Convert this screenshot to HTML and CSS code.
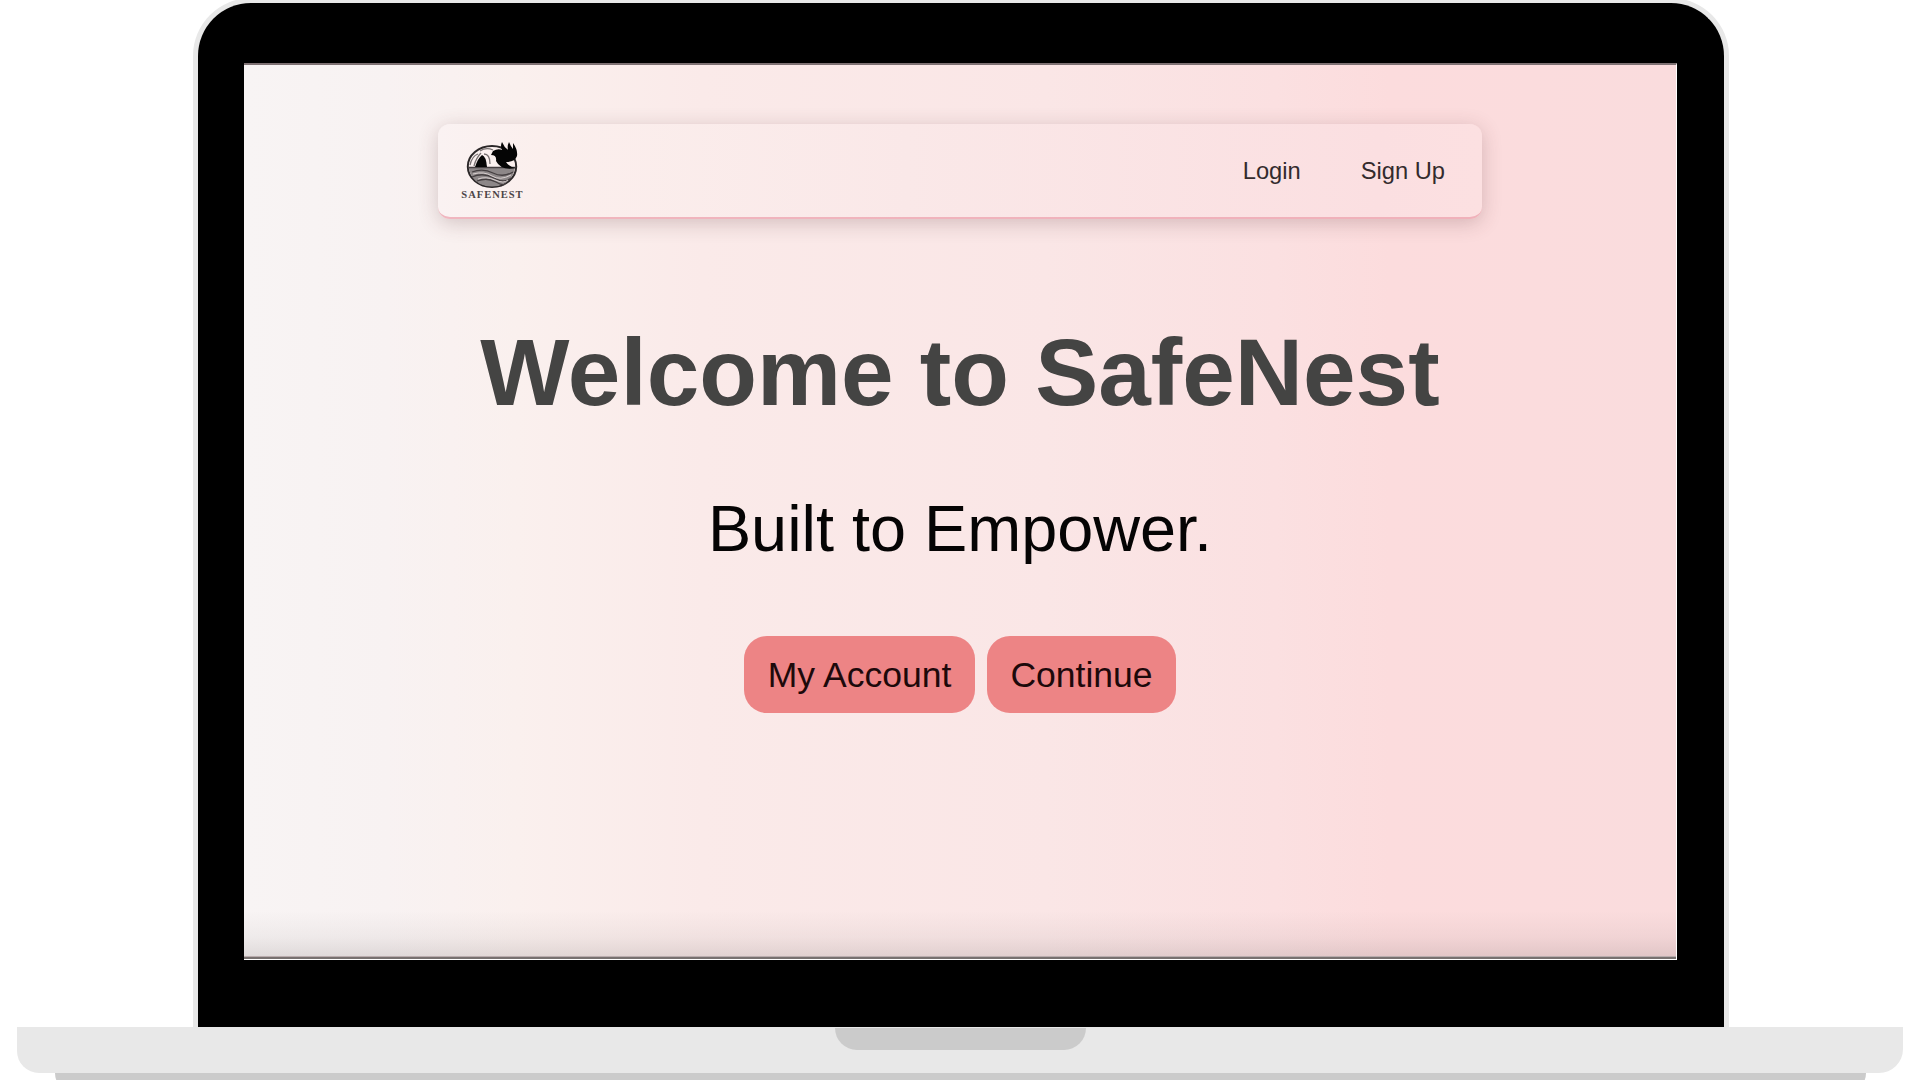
FILE: index.html
```html
<!DOCTYPE html>
<html lang="en">
<head>
<meta charset="utf-8">
<title>SafeNest</title>
<link rel="stylesheet" href="styles.css">
</head>
<body>
<div class="laptop">
  <div class="lid">
    <main class="screen">
      <nav class="navbar">
        <a class="brand">
          <svg class="brand-mark" viewBox="0 0 52 46" aria-hidden="true">
            <ellipse cx="26" cy="24.5" rx="24.2" ry="20.5" fill="none" stroke="#2b2728" stroke-width="2"/>
            <path d="M2.5 25H49Q48 36 38 42Q26 47 14 42Q4 36 2.5 25Z" fill="#8d8788"/>
            <path d="M2 25.5H50M6 30Q17 26 27 31T47 30M6 35Q17 30 28 36T45 36M11 39Q21 35 30 40T39 41" fill="none" stroke="#453f41" stroke-width="1.3"/>
            <path d="M7 32Q18 29 26 34T45 33M12 37Q20 34 29 38T42 38" fill="none" stroke="#d8cfcf" stroke-width="1"/>
            <path d="M9 25Q12 16 16 13Q20 14 21 25Z" fill="#050505"/>
            <path d="M4 23Q6 14 12 12M8 24Q10 16 15 11M14 9Q20 5 27 8M18 12Q24 12 24 22" fill="none" stroke="#777071" stroke-width="1.3"/>
            <path d="M27 9Q32 6 36 8Q34 4 36 0Q38 5 42 8Q41 4 43 0Q45 5 47 7V1Q52 8 51 14Q49 20 40 20Q43 25 50 26Q35 29 30 19Q31 13 25 13Z" fill="#050505"/>
          </svg>
          <span class="brand-name">SAFENEST</span>
        </a>
        <div class="nav-links">
          <a>Login</a>
          <a>Sign Up</a>
        </div>
      </nav>
      <h1 class="title">Welcome to SafeNest</h1>
      <p class="tagline">Built to Empower.</p>
      <div class="actions">
        <button class="button account">My Account</button>
        <button class="button continue">Continue</button>
      </div>
    </main>
  </div>
  <div class="base"><div class="notch"></div></div>
  <div class="foot"></div>
</div>
</body>
</html>
```
FILE: styles.css
```css
* { box-sizing: border-box; }
body {
  margin: 0;
  background: #fff;
  font-family: "Liberation Sans", Arial, sans-serif;
  overflow: hidden;
}
.laptop {
  height: 1080px;
  display: flex;
  flex-direction: column;
  overflow: hidden;
}
.lid {
  flex: none;
  width: 1536px;
  height: 1029px;
  margin: -2px 0 0 193px;
  padding: 60px 47px 0 46px;
  border: 5px solid #e8e8e8;
  border-bottom: 0;
  border-radius: 58px 58px 0 0;
  background: #000;
}
.screen {
  width: 1433px;
  height: 897px;
  display: flex;
  flex-direction: column;
  align-items: center;
  padding-top: 59px;
  border-top: 2px solid #7e7173;
  border-right: 1px solid #fff;
  border-bottom: 1px solid #fff;
  background:
    linear-gradient(#77706f, #77706f) bottom / 100% 2px no-repeat,
    linear-gradient(#b9acad, #b9acad) 0 calc(100% - 2px) / 100% 1px no-repeat,
    linear-gradient(to top, rgba(90, 80, 80, .17), rgba(90, 80, 80, .06) 22px, transparent 48px),
    linear-gradient(to right, #f8f4f4 0, #f8f2f2 10%, #faf0ee 19%, #faeae9 32%, #fae6e6 56%, #fbe0e1 72%, #fcdcdd 80%, #fadcdd 100%);
}
.navbar {
  width: 1044px;
  height: 95px;
  display: flex;
  justify-content: space-between;
  padding: 0 37px 0 22px;
  border-radius: 12px;
  border-bottom: 2px solid rgba(235, 157, 169, .7);
  background: linear-gradient(to right, #faf2f2, #fbefed 10%, #fae8e8 45%, #fbdfe1 90%, #fce0e1);
  box-shadow: 0 4px 20px rgba(90, 50, 55, .24);
}
.brand {
  width: 64px;
  display: flex;
  flex-direction: column;
  align-items: center;
  padding-top: 18px;
}
.brand-mark {
  width: 52px;
  height: 46px;
}
.brand-name {
  font: bold 10.5px/14px "Liberation Serif", serif;
  letter-spacing: 1px;
  margin-right: -1px;
  color: #4b4547;
}
.nav-links {
  display: flex;
  align-items: center;
  gap: 60px;
  padding-top: 1px;
  font-size: 23.7px;
  line-height: 28px;
  color: #332b2d;
}
.title {
  margin: 96px 0 0;
  font-size: 94.5px;
  line-height: 114px;
  white-space: nowrap;
  color: #444443;
}
.tagline {
  margin: 62px 0 0;
  font-size: 64.8px;
  line-height: 76px;
  white-space: nowrap;
  color: #050404;
}
.actions {
  display: flex;
  gap: 12px;
  margin-top: 69px;
}
.button {
  height: 77px;
  padding: 0;
  border: 0;
  border-radius: 23px;
  background: #ed8485;
  color: #1d090b;
  font: 35.5px/40px "Liberation Sans", Arial, sans-serif;
}
.account { width: 231px; }
.continue { width: 189px; }
.base {
  flex: none;
  width: 1886px;
  height: 46px;
  margin-left: 17px;
  padding-top: 1px;
  border-radius: 0 0 24px 22px;
  background: #e8e8e8;
}
.notch {
  width: 251px;
  height: 22px;
  margin-left: 818px;
  border-radius: 0 0 22px 22px;
  background: #cbcbcb;
}
.foot {
  flex: none;
  width: 1811px;
  height: 20px;
  margin-left: 55px;
  border-radius: 0 0 20px 20px;
  background: #cbcbcb;
}
```
